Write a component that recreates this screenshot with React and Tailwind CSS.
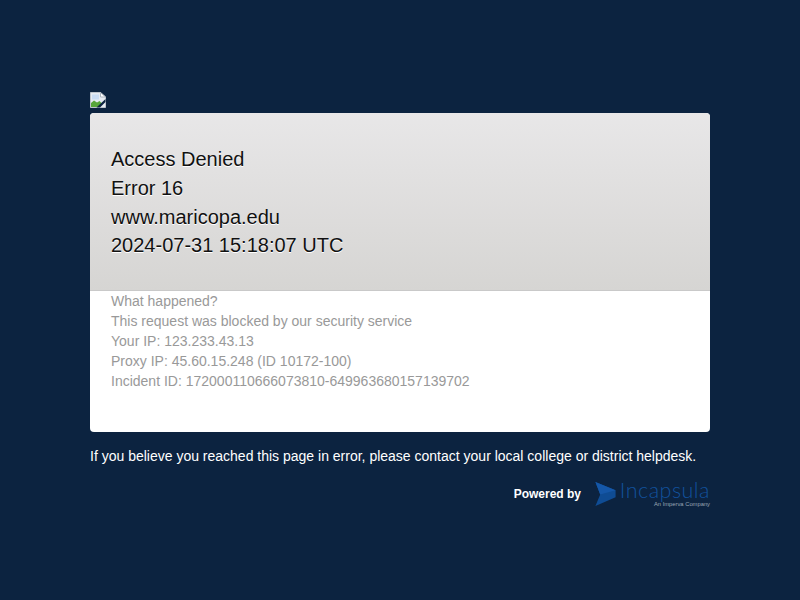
export default function App() {
  return (
    <div className="min-h-[600px] bg-[#0c2340] font-['Liberation_Sans',Arial,sans-serif] pt-[92px] px-[90px]">
      <svg width="17" height="16" viewBox="0 0 17 16" className="block h-[16px] mb-[5px]">
        <path d="M0.5 0.5H10.5L15.5 5V15.5H0.5Z" fill="#e6ebf2" stroke="#bcc3cc" />
        <path d="M10.5 0.5V5H15.5Z" fill="#fff" stroke="#aeb6c0" />
        <path d="M2 2.5H9V7.5H2Z" fill="#c9dcf4" />
        <path d="M1 15V11L4 8.5L7 10.5L9.5 9L12 11.5L9 15Z" fill="#58a63a" />
        <path d="M6.5 15.5L15.5 7V10L10 15.5Z" fill="#0c2340" />
      </svg>
      <div className="w-[620px] h-[319px] rounded-[4px] bg-white overflow-hidden">
        <div className="h-[178px] border-b border-[#c9c9c9] bg-gradient-to-b from-[#e8e7e8] to-[#d6d5d3] pt-[32.2px] px-[21px] text-[20px] leading-[28.7px] text-[#111] [text-shadow:0_1px_0_#fff]">
          <div>Access Denied</div>
          <div>Error 16</div>
          <div>www.maricopa.edu</div>
          <div>2024-07-31 15:18:07 UTC</div>
        </div>
        <div className="px-[21px] text-[14px] leading-[20px] text-[#999]">
          <div>What happened?</div>
          <div>This request was blocked by our security service</div>
          <div>Your IP: 123.233.43.13</div>
          <div>Proxy IP: 45.60.15.248 (ID 10172-100)</div>
          <div>Incident ID: 172000110666073810-649963680157139702</div>
        </div>
      </div>
      <p className="mt-[14px] text-[14px] leading-[20px] text-white">
        If you believe you reached this page in error, please contact your local college or district helpdesk.
      </p>
      <div className="mt-[11px] flex justify-end items-center w-[620px] h-[34px]">
        <span className="text-[12px] font-bold text-white mr-[14px]">Powered by</span>
        <svg width="21" height="24" viewBox="0 0 21 25" className="mr-[3px]">
          <path d="M0 0L21 8.5V16L0 25L5 13Z" fill="#0f4c94" />
          <path d="M0 0L21 8.5L5 13Z" fill="#1557a8" />
        </svg>
        <div className="w-[91px] flex flex-col items-end">
          <span className="font-['Lato',sans-serif] font-light text-[21.5px] leading-[21px] tracking-[0.5px] text-[#12519c]">Incapsula</span>
          <span className="text-[5.8px] leading-[7px] text-[#9aa6b5]">An Imperva Company</span>
        </div>
      </div>
    </div>
  );
}
